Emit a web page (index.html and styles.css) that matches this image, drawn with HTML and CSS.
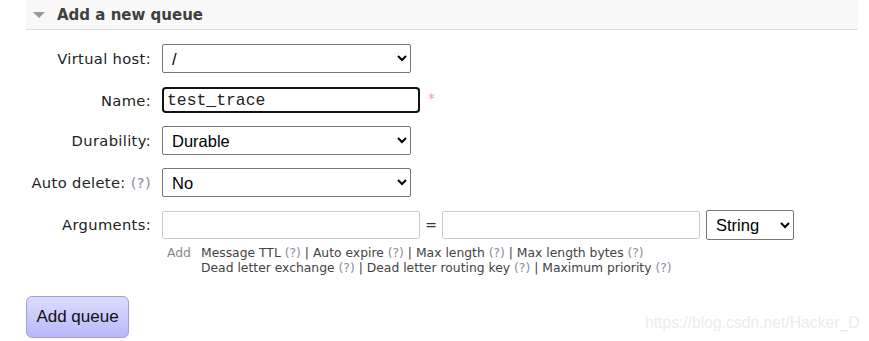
FILE: index.html
```html
<!DOCTYPE html>
<html>
<head>
<meta charset="utf-8">
<link rel="stylesheet" href="styles.css">
</head>
<body>
<div class="section">
  <h2 class="section-title"><span class="tri"></span>Add a new queue</h2>
  <form class="form">
    <div class="row row-first">
      <label class="lbl">Virtual host:</label>
      <select class="sel sel-wide"><option>/</option></select>
    </div>
    <div class="row row-name">
      <label class="lbl">Name:</label>
      <input class="txt txt-focus" value="test_trace">
      <span class="req">*</span>
    </div>
    <div class="row">
      <label class="lbl">Durability:</label>
      <select class="sel sel-wide"><option>Durable</option></select>
    </div>
    <div class="row">
      <label class="lbl">Auto delete: <span class="help">(?)</span></label>
      <select class="sel sel-wide"><option>No</option></select>
    </div>
    <div class="row">
      <label class="lbl">Arguments:</label>
      <input class="txt txt-arg">
      <span class="eq">=</span>
      <input class="txt txt-arg">
      <select class="sel sel-type"><option>String</option></select>
    </div>
    <div class="hints">
      <span class="add">Add</span>
      <div class="hint-lines">
        <div>Message TTL <span class="help">(?)</span> | Auto expire <span class="help">(?)</span> | Max length <span class="help">(?)</span> | Max length bytes <span class="help">(?)</span></div>
        <div>Dead letter exchange <span class="help">(?)</span> | Dead letter routing key <span class="help">(?)</span> | Maximum priority <span class="help">(?)</span></div>
      </div>
    </div>
    <button type="button" class="btn">Add queue</button>
  </form>
</div>
<div class="watermark">https://blog.csdn.net/Hacker_D</div>
</body>
</html>
```
FILE: styles.css
```css
html, body {
  margin: 0;
  padding: 0;
  background: #fff;
}
body {
  font-family: "DejaVu Sans", Verdana, sans-serif;
  color: #222;
  position: relative;
  width: 869px;
  height: 341px;
  overflow: hidden;
}
.section {
  margin-left: 26px;
  width: 832px;
}
.section-title {
  margin: 0;
  height: 29px;
  background: #f8f8f8;
  border-bottom: 1px solid #dddddd;
  font-size: 15px;
  font-weight: bold;
  color: #404040;
  display: flex;
  align-items: center;
  padding-left: 7px;
}
.tri {
  width: 0;
  height: 0;
  border-left: 6px solid transparent;
  border-right: 6px solid transparent;
  border-top: 6px solid #999;
  margin-right: 12px;
  margin-top: 1px;
}
.form {
  padding-top: 14px;
}
.row {
  display: flex;
  align-items: center;
  height: 29px;
  margin-bottom: 13px;
}
.row-first {
  margin-bottom: 14px;
}
.row-name {
  height: 26px;
}
.lbl {
  width: 136px;
  text-align: right;
  font-size: 14.7px;
  letter-spacing: 0.35px;
  color: #222;
  padding-right: 11px;
  box-sizing: border-box;
  white-space: nowrap;
}
.help {
  color: #8c8ca0;
}
.sel {
  font-family: "Liberation Sans", Arial, sans-serif;
  font-size: 16.5px;
  height: 29px;
  border: 1px solid #767676;
  border-radius: 2px;
  background: #fff;
  color: #000;
  padding: 0 4px 0 5px;
}
.sel-wide {
  width: 249px;
}
.sel-type {
  width: 88px;
  margin-left: 6px;
  height: 30px;
}
.txt {
  box-sizing: border-box;
  height: 28px;
  width: 258px;
  border: 1px solid #cccccc;
  border-radius: 2px;
  font-family: "Liberation Mono", "Courier New", monospace;
  font-size: 16.4px;
  padding: 0 4px;
  color: #000;
  outline: none;
}
.txt-focus {
  border: 2px solid #111;
  border-radius: 4px;
  height: 26px;
  padding: 0 3px;
  color: #222;
}
.req {
  color: #f49a9a;
  margin-left: 8px;
  font-size: 14px;
  align-self: flex-start;
  margin-top: 3px;
}
.eq {
  font-size: 14px;
  width: 22px;
  text-align: center;
  color: #333;
}
.hints {
  display: flex;
  margin-left: 141px;
  margin-top: -6px;
  font-size: 12.35px;
  line-height: 15px;
  color: #444;
}
.add {
  color: #888;
  width: 34px;
}
.btn {
  display: block;
  margin-top: 20px;
  width: 103px;
  height: 42px;
  border: 1px solid #9f9fe0;
  border-radius: 6px;
  background: linear-gradient(#dcdcff, #b8b8fb);
  font-family: "Liberation Sans", Arial, sans-serif;
  font-size: 17px;
  color: #111;
  padding: 0;
}
.watermark {
  position: absolute;
  left: 645px;
  top: 314px;
  font-family: "Liberation Sans", Arial, sans-serif;
  font-size: 15.7px;
  color: #ececec;
}
```
